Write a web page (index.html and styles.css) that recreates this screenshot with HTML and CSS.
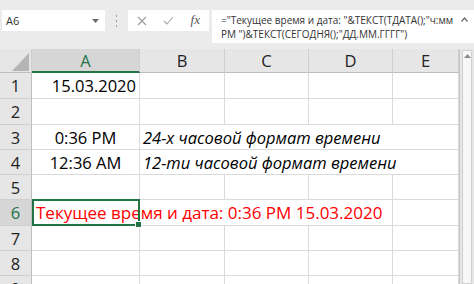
FILE: index.html
```html
<!DOCTYPE html>
<html lang="ru">
<head>
    <meta charset="UTF-8">
    <title>Excel - ТЕКСТ</title>
    <link rel="stylesheet" href="styles.css">
</head>
<body>
    <div class="toolbar">
        <div class="namebox">
            <span>A6</span>
            <svg class="dd" width="7" height="4" viewBox="0 0 7 4"><polygon points="0,0 7,0 3.5,4" fill="#6b6b6b"/></svg>
        </div>
        <svg class="grip" width="3" height="12" viewBox="0 0 3 12">
            <rect x="1" y="0" width="1" height="2" fill="#9a9a9a"/>
            <rect x="1" y="5" width="1" height="2" fill="#9a9a9a"/>
            <rect x="1" y="10" width="1" height="2" fill="#9a9a9a"/>
        </svg>
        <div class="fbuttons">
            <svg width="10" height="10" viewBox="0 0 10 10"><path d="M1 1 L9 9 M9 1 L1 9" stroke="#9b9b9b" stroke-width="1.1" fill="none"/></svg>
            <svg width="11" height="9" viewBox="0 0 11 9"><path d="M1 5 L4 8 L10 1" stroke="#a5a5a5" stroke-width="1.1" fill="none"/></svg>
            <span class="fx">fx</span>
        </div>
        <div class="formula">
            <div class="ftext">="Текущее время и дата: "&amp;ТЕКСТ(ТДАТА();"ч:мм<br>PM ")&amp;ТЕКСТ(СЕГОДНЯ();"ДД.ММ.ГГГГ")</div>
            <svg class="caret" width="7" height="5" viewBox="0 0 7 5"><path d="M0.5 4.5 L3.5 1 L6.5 4.5" stroke="#6b6b6b" stroke-width="1.2" fill="none"/></svg>
        </div>
    </div>

    <div class="workarea">
        <div class="sheet">
            <div class="corner"><svg width="32" height="24" viewBox="0 0 32 24"><polygon points="29,4 29,22 12,22" fill="#b4b4b4"/></svg></div>
            <div class="ch active">A</div>
            <div class="ch">B</div>
            <div class="ch">C</div>
            <div class="ch">D</div>
            <div class="ch">E</div>

            <div class="rh">1</div>
            <div class="c right">15.03.2020</div>
            <div class="c"></div><div class="c"></div><div class="c"></div><div class="c"></div>

            <div class="rh">2</div>
            <div class="c"></div><div class="c"></div><div class="c"></div><div class="c"></div><div class="c"></div>

            <div class="rh">3</div>
            <div class="c center">0:36 PM</div>
            <div class="c note span4">24-х часовой формат времени</div>

            <div class="rh">4</div>
            <div class="c center">12:36 AM</div>
            <div class="c note span4">12-ти часовой формат времени</div>

            <div class="rh">5</div>
            <div class="c"></div><div class="c"></div><div class="c"></div><div class="c"></div><div class="c"></div>

            <div class="rh active">6</div>
            <div class="c red">Текущее время и дата: 0:36 PM 15.03.2020</div>
            <div class="c"></div>
            <div class="selection"></div>

            <div class="rh">7</div>
            <div class="c"></div><div class="c"></div><div class="c"></div><div class="c"></div><div class="c"></div>

            <div class="rh">8</div>
            <div class="c"></div><div class="c"></div><div class="c"></div><div class="c"></div><div class="c"></div>

            <div class="rh">9</div>
            <div class="c"></div><div class="c"></div><div class="c"></div><div class="c"></div><div class="c"></div>
        </div>
        <div class="vscroll">
            <div class="track">
                <svg width="7" height="4" viewBox="0 0 7 4"><polygon points="0,4 7,4 3.5,0" fill="#8a8a8a"/></svg>
            </div>
        </div>
    </div>
</body>
</html>
```

FILE: styles.css
```css
* {
    box-sizing: border-box;
}
body {
    margin: 0;
    width: 474px;
    height: 284px;
    overflow: hidden;
    background-color: #ebebeb;
    font-family: 'Open Sans', 'Noto Sans', sans-serif;
}
.toolbar {
    height: 49px;
    display: flex;
    align-items: flex-start;
    padding: 10px 0 0 2px;
}
.namebox {
    width: 103px;
    height: 21px;
    background: #fff;
    display: flex;
    align-items: center;
    justify-content: space-between;
    padding: 0 6px 0 4px;
    font-size: 11px;
    color: #333;
}
.grip {
    margin: 5px 0 0 10px;
}
.fbuttons {
    width: 81px;
    height: 21px;
    margin-left: 10px;
    background: #fff;
    display: flex;
    align-items: center;
    justify-content: space-between;
    padding: 0 9px 0 9px;
}
.fx {
    font-family: 'Liberation Serif', serif;
    font-style: italic;
    font-size: 13px;
    color: #555;
    padding-bottom: 2px;
}
.formula {
    flex: 1;
    height: 33px;
    margin-left: 3px;
    background: #fff;
    display: flex;
    justify-content: space-between;
    padding: 3px 6px 0 9px;
    overflow: hidden;
}
.ftext {
    font-size: 10px;
    line-height: 14px;
    color: #333;
    white-space: nowrap;
}
.caret {
    margin-top: 4px;
    flex-shrink: 0;
}
.workarea {
    display: flex;
}
.sheet {
    display: grid;
    grid-template-columns: 32px 108px 85px 84px 84px 66px;
    grid-template-rows: 24px 26px 26px 25px 25px 25px 26px 25px 25px 25px;
    background: #fff;
    width: 459px;
    height: 235px;
    overflow: hidden;
    font-size: 16.5px;
    color: #000;
}
.corner {
    background: #e6e6e6;
    border-right: 1px solid #cfcfcf;
    border-bottom: 1px solid #bdbdbd;
}
.corner svg {
    display: block;
}
.ch {
    background: #e6e6e6;
    border-right: 1px solid #cfcfcf;
    border-bottom: 1px solid #bdbdbd;
    display: flex;
    align-items: center;
    justify-content: center;
    color: #222;
}
.ch.active {
    background: #d6d6d6;
    color: #217346;
    border-bottom: 2px solid #217346;
}
.rh {
    background: #e6e6e6;
    border-right: 1px solid #bdbdbd;
    border-bottom: 1px solid #cfcfcf;
    display: flex;
    align-items: center;
    justify-content: center;
    color: #222;
}
.rh.active {
    background: #d6d6d6;
    color: #217346;
}
.c {
    border-right: 1px solid #dadada;
    border-bottom: 1px solid #dadada;
    display: flex;
    align-items: center;
    padding: 0 3px;
    white-space: nowrap;
}
.right {
    justify-content: flex-end;
}
.center {
    justify-content: center;
}
.span4 {
    grid-column: span 4;
}
.note {
    font-style: italic;
}
.red {
    grid-row: 7;
    grid-column: 2 / span 4;
    color: #f00;
    font-size: 17px;
    padding-left: 4px;
}
.selection {
    grid-row: 7;
    grid-column: 2;
    border: 2px solid #217346;
    margin: -1px 0 0 0;
    position: relative;
    pointer-events: none;
}
.selection::after {
    content: "";
    position: absolute;
    right: -4px;
    bottom: -4px;
    width: 5px;
    height: 5px;
    background: #217346;
    border: 1px solid #fff;
}
.vscroll {
    width: 15px;
    height: 235px;
    border-left: 1px solid #c6c6c6;
    padding: 1px 2px 0 2px;
    background: #e6e6e6;
}
.track {
    height: 100%;
    background: #f7f7f7;
    border: 1px solid #d0d0d0;
    display: flex;
    justify-content: center;
    padding-top: 3px;
}
.track svg {
    display: block;
}
```
